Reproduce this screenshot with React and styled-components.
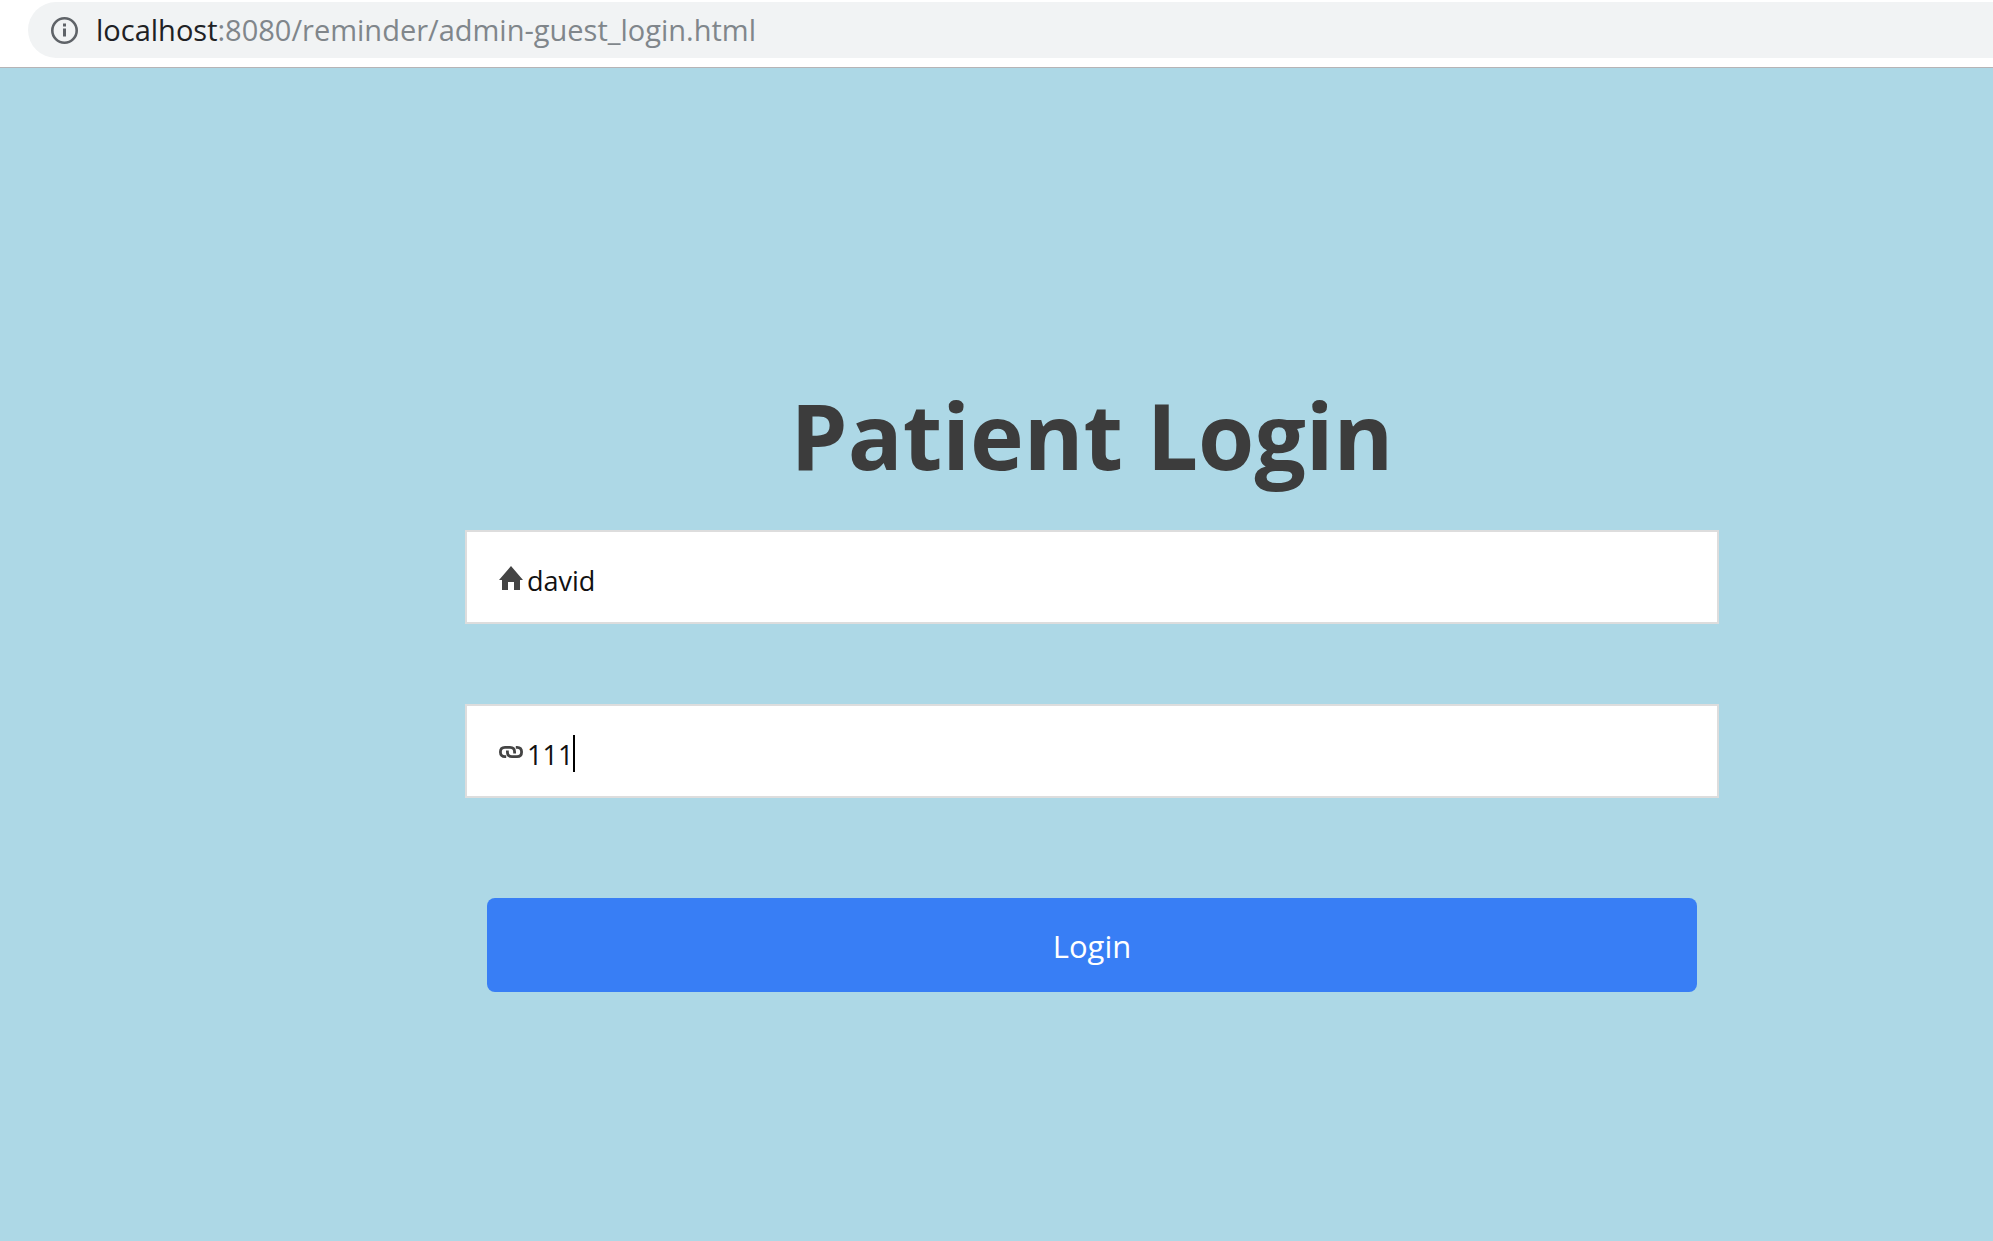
import React, { useState } from "react";
import styled, { createGlobalStyle } from "styled-components";

const GlobalStyle = createGlobalStyle`
  *, *::before, *::after { box-sizing: border-box; }
  body {
    margin: 0;
    background: #add8e6;
    font-family: "Open Sans", "Noto Sans", sans-serif;
  }
`;

const Page = styled.div`
  min-height: 100vh;
  display: flex;
  flex-direction: column;
`;

const BrowserBar = styled.header`
  padding: 2px 0 9px 28px;
  background: #fff;
  border-bottom: 1px solid #b6b4b6;
`;

const AddressBar = styled.div`
  height: 56px;
  display: flex;
  align-items: center;
  gap: 17px;
  padding-left: 22px;
  border-radius: 28px 0 0 28px;
  background: #f1f3f4;
`;

const InfoIcon = styled.svg`
  width: 29px;
  height: 29px;
  flex: none;
`;

const Address = styled.span`
  color: #80868b;
  font-size: 29px;
  line-height: 40px;
  white-space: nowrap;
`;

const Host = styled.span`
  color: #202124;
`;

const Main = styled.main`
  flex: 1;
  padding: 303px 274px 40px 465px;
`;

const Form = styled.form`
  display: flex;
  flex-direction: column;
`;

const Title = styled.h1`
  margin: 0 0 31px;
  color: #3c3c3c;
  font-size: 91px;
  font-weight: 700;
  line-height: 128px;
  text-align: center;
`;

const Fields = styled.div`
  display: grid;
  gap: 80px;
`;

const Field = styled.label`
  height: 94px;
  display: flex;
  align-items: center;
  gap: 4px;
  padding: 7px 32px 0;
  border: 2px solid #ddd;
  background: #fff;
`;

const FieldIcon = styled.svg`
  width: 24px;
  height: 24px;
  flex: none;
  margin-bottom: 6px;
`;

const Entry = styled.span`
  position: relative;
  flex: 1;
  display: flex;
`;

const Input = styled.input`
  width: 100%;
  height: 40px;
  padding: 0;
  border: 0;
  outline: 0;
  background: transparent;
  color: #111;
  font: 400 27px/40px "Open Sans", "Noto Sans", sans-serif;
`;

const Caret = styled.span`
  position: absolute;
  top: 0;
  left: ${({ $chars }) => $chars}ch;
  width: 2px;
  height: 37px;
  background: #000;
  font-size: 27px;
`;

const LoginButton = styled.button`
  height: 94px;
  margin: 100px 22px 0;
  padding: 2px 0 0;
  border: 0;
  border-radius: 8px;
  background: #387ef5;
  color: #fff;
  font: 400 31px/40px "Open Sans", "Noto Sans", sans-serif;
  cursor: pointer;
`;

function HomeGlyph() {
  return (
    <FieldIcon viewBox="0 0 24 24" aria-hidden="true">
      <path d="M12 0 24 14H21V24H15V16H9V24H3V14H0Z" fill="#444" />
    </FieldIcon>
  );
}

function LinkGlyph() {
  return (
    <FieldIcon viewBox="0 0 24 24" aria-hidden="true" fill="none" stroke="#444" strokeWidth="2.8">
      <path d="M7.2 16.6H6C3.2 16.6 1.4 15 1.4 12S3.2 7.4 6 7.4H11C14 7.4 15.6 9 15.6 12V13.6" />
      <path d="M16.8 7.4H18C20.8 7.4 22.6 9 22.6 12S20.8 16.6 18 16.6H13C10 16.6 8.4 15 8.4 12V10.4" />
    </FieldIcon>
  );
}

export default function App() {
  const [user, setUser] = useState("david");
  const [password, setPassword] = useState("111");

  return (
    <Page>
      <GlobalStyle />
      <BrowserBar>
        <AddressBar>
          <InfoIcon viewBox="0 0 29 29" aria-hidden="true">
            <circle cx="14.5" cy="14.5" r="12.2" fill="none" stroke="#5f6368" strokeWidth="2.6" />
            <path d="M13 7.5h3v3h-3zM13 12.5h3v8h-3z" fill="#5f6368" />
          </InfoIcon>
          <Address>
            <Host>localhost</Host>:8080/reminder/admin-guest_login.html
          </Address>
        </AddressBar>
      </BrowserBar>
      <Main>
        <Form onSubmit={(event) => event.preventDefault()}>
          <Title>Patient Login</Title>
          <Fields>
            <Field>
              <HomeGlyph />
              <Entry>
                <Input
                  aria-label="User name"
                  value={user}
                  onChange={(event) => setUser(event.target.value)}
                />
              </Entry>
            </Field>
            <Field>
              <LinkGlyph />
              <Entry>
                <Input
                  aria-label="Password"
                  value={password}
                  onChange={(event) => setPassword(event.target.value)}
                />
                <Caret $chars={password.length} />
              </Entry>
            </Field>
          </Fields>
          <LoginButton type="submit">Login</LoginButton>
        </Form>
      </Main>
    </Page>
  );
}
